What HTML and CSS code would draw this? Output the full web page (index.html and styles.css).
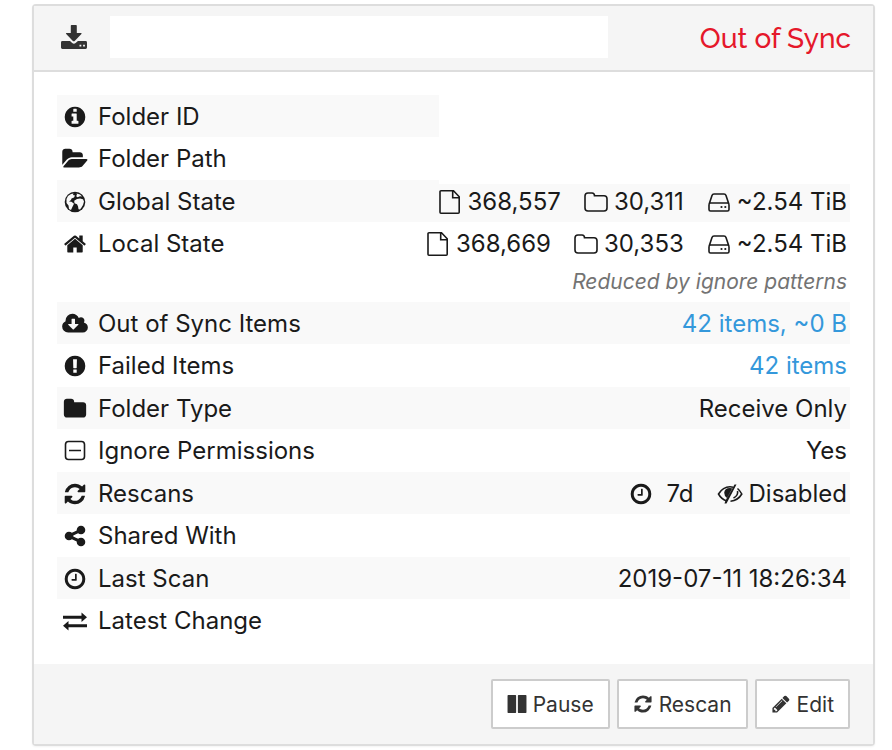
FILE: index.html
```html
<!DOCTYPE html>
<html lang="en">
<head>
  <meta charset="UTF-8">
  <meta name="viewport" content="width=device-width, initial-scale=1.0">
  <title>Folder</title>
  <link rel="stylesheet" href="styles.css">
</head>
<body>
  <!-- shared icons -->
  <svg class="sprite" aria-hidden="true">
    <symbol id="refresh" viewBox="0 0 1792 1792"><path d="M1639 1056q0 5-1 7-64 268-268 434.5t-478 166.5q-146 0-282.5-55t-243.5-157l-129 129q-19 19-45 19t-45-19-19-45v-448q0-26 19-45t45-19h448q26 0 45 19t19 45-19 45l-137 137q71 66 161 102t187 36q134 0 250-65t186-179q11-17 53-117 8-23 30-23h192q13 0 22.500 9.500t9.500 22.500zm25-800v448q0 26-19 45t-45 19h-448q-26 0-45-19t-19-45 19-45l138-138q-148-137-349-137-134 0-250 65t-186 179q-11 17-53 117-8 23-30 23h-199q-13 0-22.500-9.500t-9.500-22.500v-7q65-268 270-434.500t480-166.500q146 0 284 55.500t245 156.500l130-129q19-19 45-19t45 19 19 45z"/></symbol>
    <symbol id="clock" viewBox="0 0 1792 1792"><path d="M1024 544v448q0 14-9 23t-23 9h-320q-14 0-23-9t-9-23v-64q0-14 9-23t23-9h224v-352q0-14 9-23t23-9h64q14 0 23 9t9 23zm416 352q0-148-73-273t-198-198-273-73-273 73-198 198-73 273 73 273 198 198 273 73 273-73 198-198 73-273zm224 0q0 209-103 385.500t-279.500 279.500-385.500 103-385.500-103-279.500-279.500-103-385.500 103-385.500 279.500-279.500 385.500-103 385.500 103 279.500 279.500 103 385.500z"/></symbol>
    <symbol id="file" viewBox="0 0 22 24"><path d="M2 .8h12.500l5.700 5.900v15.500a1 1 0 0 1-1 1H2a1 1 0 0 1-1-1V1.800a1 1 0 0 1 1-1zM13.700 1v6.700h6.500" fill="none" stroke="currentColor" stroke-width="1.600"/></symbol>
    <symbol id="folder-o" viewBox="0 0 24 24"><path d="M1 6q0-3 3-3h4q2.500 0 2.500 2.700H20q3 0 3 3V18q0 3-3 3H4q-3 0-3-3z" fill="none" stroke="currentColor" stroke-width="1.600"/></symbol>
    <symbol id="disk" viewBox="0 0 22 24"><path d="M1 14.500v5q0 1.500 1.500 1.500h17q1.500 0 1.500-1.500v-5q0-1.500-1.500-1.500h-17Q1 13 1 14.500zl3-9Q4.500 4 6 4h10q1.500 0 2 1.500l3 9" fill="none" stroke="currentColor" stroke-width="1.600"/><circle cx="13.500" cy="17" r="1.100"/><circle cx="17.300" cy="17" r="1.100"/></symbol>
  </svg>

  <section class="panel">
    <header class="panel-heading">
      <svg class="icon folder-icon" viewBox="0 0 26 24"><path d="M10.500 0h4.500q.8 0 .8.800V8h4q1.500 0 .6 1.100l-6.700 6.800q-.9.900-1.800 0L5.200 9.100Q4.300 8 5.800 8h4V.8q0-.8.700-.8z"/><path d="M1.400 16H9l2.200 2.100q1.700 1.500 3.400 0L16.900 16h7.700q1.400 0 1.400 1.400v5.200q0 1.400-1.400 1.400H1.400Q0 24 0 22.600v-5.200Q0 16 1.400 16zM18.500 19.800v1.800h1.800v-1.800zm3.600 0v1.800h1.800v-1.800z" fill-rule="evenodd"/></svg>
      <div class="folder-name"></div>
      <h3 class="status">Out of Sync</h3>
    </header>

    <div class="panel-body">
      <table class="details">
        <tr>
          <th><span class="label"><svg class="icon" viewBox="0 0 1792 1792"><path d="M1152 1376v-160q0-14-9-23t-23-9h-96v-512q0-14-9-23t-23-9h-320q-14 0-23 9t-9 23v160q0 14 9 23t23 9h96v320h-96q-14 0-23 9t-9 23v160q0 14 9 23t23 9h448q14 0 23-9t9-23zm-128-896v-160q0-14-9-23t-23-9h-192q-14 0-23 9t-9 23v160q0 14 9 23t23 9h192q14 0 23-9t9-23zm640 416q0 209-103 385.500t-279.500 279.500-385.500 103-385.500-103-279.500-279.500-103-385.500 103-385.500 279.500-279.500 385.500-103 385.500 103 279.500 279.500 103 385.500z"/></svg>Folder ID</span></th>
          <td></td>
        </tr>
        <tr>
          <th><span class="label"><svg class="icon" viewBox="0 0 1900 1792"><path d="M1879 952q0 31-31 66l-336 396q-43 51-120.500 86.500t-143.500 35.500h-1088q-34 0-60.500-13t-26.500-43q0-31 31-66l336-396q43-51 120.500-86.500t143.500-35.500h1088q34 0 60.500 13t26.500 43zm-343-344v160h-832q-94 0-197 47.500t-164 119.500l-337 396-5 6q0-4-.5-12.500t-.5-12.500v-960q0-92 66-158t158-66h320q92 0 158 66t66 158v32h544q92 0 158 66t66 158z"/></svg>Folder Path</span></th>
          <td></td>
        </tr>
        <tr>
          <th><span class="label"><svg class="icon" viewBox="0 0 24 24"><circle cx="12" cy="12" r="10.300"/><path d="M3.500 9l1.500-3 3-2 2.500-.5L10 5l2 .5-1 2-2.500 1L8 10l-2 1.500 2.500.3 2.500 2-1.500 3-1.500 3.200-2-1-.5-3.500L3.500 13zM13.500 3.600l3.500.9 2 2-2-.3-2.500 1L13 6l1-1zM14 9l3-.6 3 .8 1 2.300-1 3.500-1.500 2.500-1.500 2-1.500-.3-.5-3-1-2-2.500-1-.3-2.400z" fill="#f9f9f9"/></svg>Global State</span></th>
          <td>
            <span class="stats">
              <span><svg class="icon"><use href="#file"/></svg>368,557</span>
              <span><svg class="icon"><use href="#folder-o"/></svg>30,311</span>
              <span><svg class="icon"><use href="#disk"/></svg>~2.54 TiB</span>
            </span>
          </td>
        </tr>
        <tr>
          <th><span class="label"><svg class="icon" viewBox="0 0 1792 1792"><path d="M1472 992v480q0 26-19 45t-45 19h-384v-384h-256v384h-384q-26 0-45-19t-19-45v-480q0-1 .5-3t.5-3l575-474 575 474q1 2 1 6zm223-69l-62 74q-8 9-21 11h-3q-13 0-21-7l-692-577-692 577q-12 8-24 7-13-2-21-11l-62-74q-8-10-7-23.500t11-21.500l719-599q32-26 76-26t76 26l244 204v-195q0-14 9-23t23-9h192q14 0 23 9t9 23v408l219 182q10 8 11 21.500t-7 23.500z"/></svg>Local State</span></th>
          <td>
            <span class="stats">
              <span><svg class="icon"><use href="#file"/></svg>368,669</span>
              <span><svg class="icon"><use href="#folder-o"/></svg>30,353</span>
              <span><svg class="icon"><use href="#disk"/></svg>~2.54 TiB</span>
            </span>
            <em class="note">Reduced by ignore patterns</em>
          </td>
        </tr>
        <tr>
          <th><span class="label"><svg class="icon" viewBox="64 0 1920 1792"><path fill-rule="evenodd" d="M1984 1152q0 159-112.500 271.500t-271.500 112.500h-1088q-185 0-316.500-131.500t-131.500-316.500q0-130 70-240t188-165q-2-30-2-43 0-212 150-362t362-150q156 0 285.500 87t188.500 231q71-62 166-62 106 0 181 75t75 181q0 76-41 138 130 31 213.500 135.500t83.500 238.500zM1280 928q0-14-9-23t-23-9h-224v-352q0-13-9.500-22.500t-22.500-9.500h-192q-13 0-22.500 9.500t-9.500 22.500v352h-224q-13 0-22.500 9.500t-9.500 22.500q0 14 9 23l352 352q9 9 23 9t23-9l351-351q10-12 10-24z"/></svg>Out of Sync Items</span></th>
          <td><a href="#">42 items, ~0 B</a></td>
        </tr>
        <tr>
          <th><span class="label"><svg class="icon" viewBox="0 0 1792 1792"><path d="M896 128q209 0 385.500 103t279.500 279.500 103 385.500-103 385.500-279.500 279.500-385.500 103-385.500-103-279.500-279.500-103-385.500 103-385.500 279.500-279.500 385.500-103zm128 1247v-190q0-14-9-23.500t-22-9.500h-192q-13 0-23 10t-10 23v190q0 13 10 23t23 10h192q13 0 22-9.500t9-23.500zm-2-344l18-621q0-12-10-18-10-8-24-8h-220q-14 0-24 8-10 6-10 18l17 621q0 10 10 17.500t24 7.500h185q14 0 23.500-7.500t10.500-17.500z"/></svg>Failed Items</span></th>
          <td><a href="#">42 items</a></td>
        </tr>
        <tr>
          <th><span class="label"><svg class="icon" viewBox="0 0 1792 1792"><path d="M1728 608v704q0 92-66 158t-158 66h-1216q-92 0-158-66t-66-158v-960q0-92 66-158t158-66h320q92 0 158 66t66 158v32h672q92 0 158 66t66 158z"/></svg>Folder Type</span></th>
          <td>Receive Only</td>
        </tr>
        <tr>
          <th><span class="label"><svg class="icon" viewBox="0 0 24 24"><path d="M5.500 2.500h13q3 0 3 3v12q0 3-3 3h-13q-3 0-3-3v-12q0-3 3-3zM6 11.500h12" fill="none" stroke="currentColor" stroke-width="1.600"/></svg>Ignore Permissions</span></th>
          <td>Yes</td>
        </tr>
        <tr>
          <th><span class="label"><svg class="icon"><use href="#refresh"/></svg>Rescans</span></th>
          <td>
            <span class="stats">
              <span class="interval"><svg class="icon"><use href="#clock"/></svg>7d</span>
              <span><svg class="icon eye" viewBox="0 0 26 24"><path d="M10 19Q4.500 17.500 1.500 12 6 4.800 13 4.800q1.500 0 3 .4M20.500 6.500q2.500 2 4.300 5.500-3.800 6.500-11.300 7.200M20.500 9q1 4.500-4 7" fill="none" stroke="currentColor" stroke-width="1.600"/><path d="M17.500 2.500h2L9.500 21.500h-2l1-3zM13 6q-5.500 0-5.800 4.800 0 3.200 2.800 5.200l5.500-9.500z"/></svg>Disabled</span>
            </span>
          </td>
        </tr>
        <tr>
          <th><span class="label"><svg class="icon" viewBox="0 0 1792 1792"><path d="M1344 1024q133 0 226.500 93.500t93.500 226.500-93.500 226.500-226.500 93.500-226.500-93.500-93.500-226.500q0-12 2-34l-360-180q-92 86-218 86-133 0-226.500-93.500t-93.500-226.500 93.500-226.500 226.500-93.500q126 0 218 86l360-180q-2-22-2-34 0-133 93.500-226.500t226.500-93.500 226.500 93.500 93.500 226.500-93.500 226.500-226.500 93.500q-126 0-218-86l-360 180q2 22 2 34t-2 34l360 180q92-86 218-86z"/></svg>Shared With</span></th>
          <td></td>
        </tr>
        <tr>
          <th><span class="label"><svg class="icon"><use href="#clock"/></svg>Last Scan</span></th>
          <td>2019-07-11 18:26:34</td>
        </tr>
        <tr>
          <th><span class="label"><svg class="icon" viewBox="0 0 26 24"><path d="M1 6.800h18.500V3.500L25 8.300l-5.500 4.600V9.800H1zM25 15.200H6.500v-3.100L1 16.800l5.500 4.700v-3.300H25z"/></svg>Latest Change</span></th>
          <td></td>
        </tr>
      </table>
      <div class="hidden-values"></div>
    </div>

    <footer class="panel-footer">
      <button type="button"><svg class="icon" viewBox="0 0 1792 1792"><path d="M1744 160v1472q0 26-19 45t-45 19h-640q-26 0-45-19t-19-45v-1472q0-26 19-45t45-19h640q26 0 45 19t19 45zm-928 0v1472q0 26-19 45t-45 19h-640q-26 0-45-19t-19-45v-1472q0-26 19-45t45-19h640q26 0 45 19t19 45z"/></svg>Pause</button>
      <button type="button"><svg class="icon"><use href="#refresh"/></svg>Rescan</button>
      <button type="button"><svg class="icon" viewBox="0 0 1792 1792"><path d="M491 1536l91-91-235-235-91 91v107h128v128h107zm523-928q0-22-22-22-10 0-17 7l-542 542q-7 7-7 17 0 22 22 22 10 0 17-7l542-542q7-7 7-17zm-54-192l416 416-832 832h-416v-416zm683 96q0 53-37 90l-166 166-416-416 166-165q36-38 90-38 53 0 91 38l235 234q37 39 37 91z"/></svg>Edit</button>
    </footer>
  </section>
</body>
</html>
```
FILE: styles.css
```css
* {
  box-sizing: border-box;
}

body {
  margin: 0;
  padding: 4px 17px 4px 32px;
  font-family: Inter, "Liberation Sans", sans-serif;
  font-size: 24px;
  line-height: 34px;
  color: #1a1a1a;
  background-color: #fff;
}

.sprite {
  display: none;
}

.icon {
  width: 24px;
  height: 24px;
  flex: none;
  fill: currentColor;
}

.panel {
  border: 2px solid #ddd;
  border-radius: 4px;
  box-shadow: 0 1px 2px rgba(0, 0, 0, 0.05);
}

.panel-heading {
  display: flex;
  align-items: center;
  padding: 10px 22px 12px 27px;
  background-color: #f5f5f5;
  border-bottom: 2px solid #ddd;
  color: #333;
}

.folder-icon {
  width: 26px;
}

.folder-name {
  width: 63%;
  height: 42px;
  margin-left: 23px;
  background-color: #fff;
}

.status {
  margin: 0 0 0 auto;
  padding-top: 3px;
  font-family: Raleway, Lato, sans-serif;
  font-size: 28px;
  font-weight: 500;
  color: #e5182b;
}

.panel-body {
  position: relative;
  padding: 23px 23px 22px;
}

.details {
  width: 100%;
  border-collapse: collapse;
}

.details tr {
  height: 43px;
}

.details tr:nth-child(odd) {
  height: 42px;
  background-color: #f9f9f9;
}

th,
td {
  padding: 5px 3px 3px 5px;
  font-weight: 400;
  text-align: left;
  vertical-align: top;
  white-space: nowrap;
}

td {
  text-align: right;
}

.label {
  display: flex;
  align-items: center;
  gap: 10px;
}

.label .icon {
  width: 26px;
}

.stats {
  display: flex;
  justify-content: flex-end;
  gap: 23px;
}

.stats span {
  display: flex;
  align-items: center;
  gap: 6px;
}

.stats .interval {
  gap: 13px;
}

.stats .eye {
  width: 26px;
}

.note {
  display: block;
  padding-top: 4px;
  font-size: 21px;
  color: #737373;
}

a {
  color: #3498db;
  text-decoration: none;
}

/* covers the id and path values */
.hidden-values {
  position: absolute;
  top: 23px;
  right: 23px;
  width: 411px;
  height: 89px;
  background-color: #fff;
}

.panel-footer {
  display: flex;
  justify-content: flex-end;
  gap: 7px;
  padding: 15px 23px;
  background-color: #f5f5f5;
}

button {
  display: flex;
  align-items: center;
  gap: 6px;
  height: 50px;
  padding: 0 14px;
  border: 2px solid #ccc;
  border-radius: 2px;
  background-color: #fff;
  font-family: inherit;
  font-size: 21px;
  color: #333;
  cursor: pointer;
}

button .icon {
  width: 20px;
  height: 20px;
}
```
